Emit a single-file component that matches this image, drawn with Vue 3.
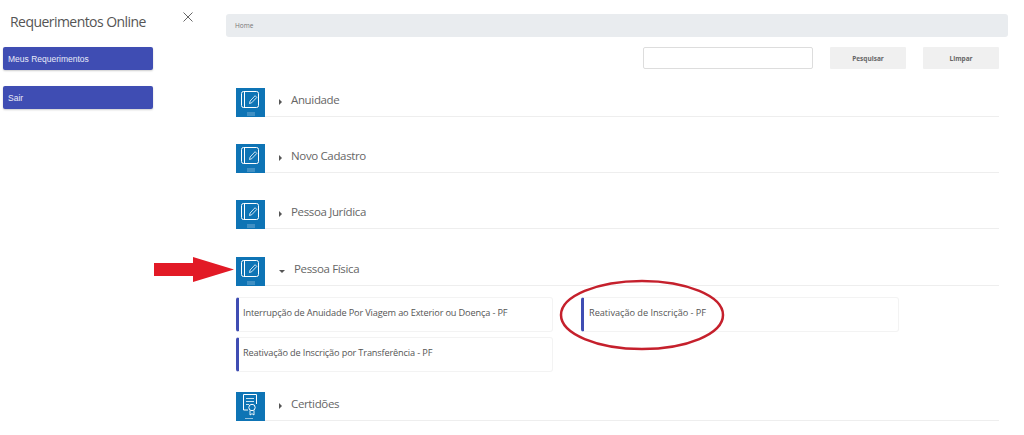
<script setup>
const before = ['Anuidade', 'Novo Cadastro', 'Pessoa Jurídica']
</script>

<template>
  <div class="page">
    <aside class="side">
      <div class="side-head">
        <h1>Requerimentos Online</h1>
        <svg class="close" width="10" height="10" viewBox="0 0 10 10"><path d="M.5.5l9 9M9.500.5l-9 9" stroke="#666" stroke-width="1" fill="none"/></svg>
      </div>
      <a class="nav first">Meus Requerimentos</a>
      <a class="nav">Sair</a>
    </aside>
    <main class="main">
      <div class="crumb">Home</div>
      <div class="search">
        <input class="field" />
        <button class="btn">Pesquisar</button>
        <button class="btn">Limpar</button>
      </div>
      <section v-for="t in before" :key="t" class="sec">
        <div class="tile">
          <svg width="29" height="29" viewBox="0 0 29 29" fill="none" stroke="#fff"><rect x="5.500" y="3.500" width="17" height="16" rx="2"/><path d="M8.500 3.500v16"/><path d="M13.500 15.500l.6-2.500 5-5.300 1.700 1.700-5 5.300z" stroke-width=".8"/><path d="M11 25h8M11 27h8" stroke-width=".7" opacity=".6"/></svg>
        </div>
        <span class="tri"></span>
        <span class="lbl">{{ t }}</span>
      </section>
      <section class="sec open">
        <div class="tile">
          <svg width="29" height="29" viewBox="0 0 29 29" fill="none" stroke="#fff"><rect x="5.500" y="3.500" width="17" height="16" rx="2"/><path d="M8.500 3.500v16"/><path d="M13.500 15.500l.6-2.500 5-5.300 1.700 1.700-5 5.300z" stroke-width=".8"/><path d="M11 25h8M11 27h8" stroke-width=".7" opacity=".6"/></svg>
        </div>
        <span class="tri down"></span>
        <span class="lbl">Pessoa Física</span>
      </section>
      <div class="cards">
        <div class="card">Interrupção de Anuidade Por Viagem ao Exterior ou Doença - PF</div>
        <div class="card wide">Reativação de Inscrição - PF</div>
        <div class="card">Reativação de Inscrição por Transferência - PF</div>
      </div>
      <section class="sec last">
        <div class="tile">
          <svg width="29" height="29" viewBox="0 0 29 29" fill="none" stroke="#fff"><path d="M12 18H7.500V2.500h13V12"/><path d="M10 6.500h8M10 9.500h8M10 12.500h3" stroke-width=".8"/><circle cx="16" cy="15.500" r="3.200"/><path d="M14 18.500V23l2-1.300 2 1.300v-4.500" stroke-width=".9"/><path d="M9 26.500h8" stroke-width=".8" opacity=".7"/></svg>
        </div>
        <span class="tri"></span>
        <span class="lbl">Certidões</span>
      </section>
    </main>
    <svg class="arrow" width="81" height="26" viewBox="0 0 81 26"><path d="M0 6h39V0l41 12.500-41 12.500v-6H0z" fill="#e21a26"/></svg>
    <svg class="ring" width="170" height="74" viewBox="0 0 170 74"><ellipse cx="84" cy="36" rx="81" ry="34" fill="none" stroke="#c5202c" stroke-width="2.500"/></svg>
  </div>
</template>

<style scoped>
.page { position: relative; display: flex; width: 1024px; height: 435px; overflow: hidden; background: #fff; font-family: "Open Sans", sans-serif; color: #555; }
.side { width: 226px; flex: none; padding: 0 0 0 3px; box-sizing: border-box; }
.side-head { height: 47px; display: flex; align-items: flex-start; }
.side-head h1 { margin: 13px 0 0 7px; width: 173px; font-size: 14px; line-height: 18px; font-weight: 400; letter-spacing: -.55px; color: #555; white-space: nowrap; }
.close { margin-top: 12px; }
.nav { display: flex; align-items: center; width: 150px; height: 23px; padding-left: 5px; box-sizing: border-box; background: #3f4db3; border-radius: 2px; color: #e8eaf8; font: 8.500px "Liberation Sans", sans-serif; box-shadow: 0 1px 2px rgba(0,0,0,.2); }
.nav.first { margin-bottom: 16px; }
.main { width: 782px; padding-top: 14px; }
.crumb { height: 23px; line-height: 23px; padding-left: 9px; background: #e9ecef; border-radius: 3px; font-size: 6.500px; color: #777; }
.search { display: flex; justify-content: flex-end; gap: 17px; width: 773px; margin-top: 10px; height: 22px; }
.field { width: 170px; height: 22px; box-sizing: border-box; border: 1px solid #ddd; border-radius: 2px; background: #fff; padding: 0; outline: none; }
.btn { width: 76px; height: 22px; border: 0; padding: 0; background: #f0f0f0; border-radius: 1px; font: 700 6.500px "Open Sans", sans-serif; color: #666; }
.sec { display: flex; align-items: center; width: 763px; height: 29px; margin: 19px 0 0 10px; border-bottom: 1px solid #eee; box-sizing: border-box; }
.sec + .sec { margin-top: 27px; }
.sec.open { margin-top: 28px; }
.sec.last { margin-top: 20px; }
.tile { width: 29px; height: 29px; flex: none; background: #0e74b5; }
.tile svg { display: block; }
.tri { margin: 0 9px 0 14px; width: 0; height: 0; border-left: 3.500px solid #555; border-top: 3px solid transparent; border-bottom: 3px solid transparent; }
.tri.down { margin: 0 9px 0 14px; border-left: 3.500px solid transparent; border-right: 3.500px solid transparent; border-top: 3.500px solid #555; border-bottom: 0; }
.lbl { font-size: 11.500px; letter-spacing: -.35px; color: #666; padding-bottom: 5px; }
.cards { display: grid; grid-template-columns: 317px 318px; column-gap: 28px; row-gap: 5px; margin: 11px 0 0 10px; }
.card { height: 35px; line-height: 30px; box-sizing: border-box; padding-left: 4px; border: 1px solid #f3f3f3; border-left: 3px solid #3f4db3; border-radius: 3px; font-size: 9.200px; letter-spacing: -.15px; color: #555; white-space: nowrap; }
.card.wide { padding-left: 5px; letter-spacing: -.03px; }
.arrow { position: absolute; left: 154px; top: 257px; }
.ring { position: absolute; left: 558px; top: 279px; }
</style>
